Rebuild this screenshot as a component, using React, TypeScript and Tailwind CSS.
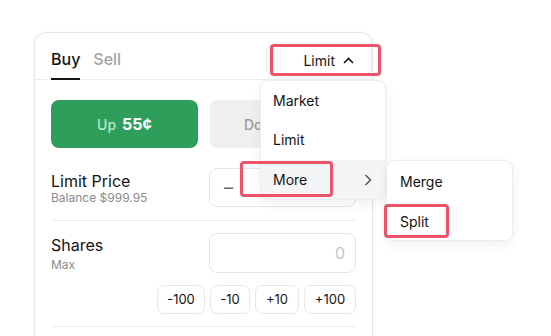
import React from "react";

const font = { fontFamily: "Inter, 'Noto Sans', sans-serif" };

export default function App() {
  return (
    <div className="relative w-[551px] h-[336px] overflow-hidden bg-white text-[#141414]" style={font}>
      <div className="absolute left-[34px] top-[32px] w-[339px] h-[340px] rounded-[12px] border border-[#e6e6e6] bg-white shadow-[0_1px_4px_rgba(0,0,0,0.04)]">
        {/* header */}
        <div className="flex items-end justify-between h-[47px] border-b border-[#ececec] px-4">
          <div className="flex gap-[13px] items-end">
            <div className="relative pb-[10px] text-[16px] font-medium leading-[20px]">
              Buy
              <div className="absolute left-0 right-0 bottom-[-1px] h-[2px] bg-[#141414]" />
            </div>
            <div className="pb-[10px] text-[16px] font-medium leading-[20px] text-[#a3a3a3]">Sell</div>
          </div>
          <div className="mb-[5px] mr-[-16px] flex items-center justify-end gap-[8px] h-[28px] w-[106px] pr-[17px] rounded-[6px] border border-[#e8e8e8] bg-white text-[14px]">
            <span>Limit</span>
            <svg width="11" height="7" viewBox="0 0 11 7" fill="none">
              <polyline points="1,6 5.5,1.5 10,6" stroke="#141414" strokeWidth="1.6" />
            </svg>
          </div>
        </div>
        {/* body */}
        <div className="px-4 pt-[20px]">
          <div className="flex gap-[12px]">
            <div className="flex items-center justify-center gap-[6px] w-[147px] h-[48px] rounded-[8px] bg-[#2f9e5b]">
              <span className="text-[14px] font-medium text-[#b9e8c9]">Up</span>
              <span className="text-[16px] font-bold text-white">55¢</span>
            </div>
            <div className="flex items-center justify-start pl-[34px] flex-1 h-[48px] rounded-[8px] bg-[#efefef]">
              <span className="text-[14px] font-medium text-[#9a9a9a]">Down</span>
            </div>
          </div>

          <div className="flex items-center justify-between mt-[20px] pb-[13px] border-b border-[#efefef]">
            <div className="flex flex-col">
              <span className="text-[16px] leading-[20px]">Limit Price</span>
              <span className="text-[12px] leading-[14px] text-[#8a8a8a]">Balance $999.95</span>
            </div>
            <div className="flex items-center w-[147px] h-[39px] rounded-[8px] border border-[#e6e6e6] px-[14px]">
              <span className="text-[18px] text-[#666]">–</span>
            </div>
          </div>

          <div className="pt-[12px] pb-[12px] border-b border-[#efefef]">
            <div className="flex justify-between">
              <div className="flex flex-col pt-[2px]">
                <span className="text-[16px] leading-[20px]">Shares</span>
                <span className="text-[12px] leading-[20px] text-[#8a8a8a]">Max</span>
              </div>
              <div className="flex items-center justify-end w-[147px] h-[40px] rounded-[8px] border border-[#e6e6e6] px-[10px]">
                <span className="text-[16px] text-[#c4c4c4]">0</span>
              </div>
            </div>
            <div className="flex justify-end gap-[5px] mt-[10px]">
              <div className="flex items-center justify-center w-[48px] h-[29px] rounded-[7px] border border-[#e8e8e8] text-[13px]">-100</div>
              <div className="flex items-center justify-center w-[40px] h-[29px] rounded-[7px] border border-[#e8e8e8] text-[13px]">-10</div>
              <div className="flex items-center justify-center w-[44px] h-[29px] rounded-[7px] border border-[#e8e8e8] text-[13px]">+10</div>
              <div className="flex items-center justify-center w-[52px] h-[29px] rounded-[7px] border border-[#e8e8e8] text-[13px]">+100</div>
            </div>
          </div>
        </div>
      </div>

      {/* dropdown menu */}
      <div className="absolute left-[260px] top-[80px] w-[126px] rounded-[8px] border border-[#ececec] bg-white shadow-[0_4px_12px_rgba(0,0,0,0.06)] overflow-hidden text-[14px]">
        <div className="flex items-center h-[38px] pl-[12px]">Market</div>
        <div className="flex items-center h-[41px] pl-[12px]">Limit</div>
        <div className="flex items-center justify-between h-[39px] pl-[12px] pr-[13px] bg-[#f4f5f6]">
          <span>More</span>
          <svg width="8" height="12" viewBox="0 0 8 12" fill="none">
            <polyline points="1.5,1 6.5,6 1.5,11" stroke="#555" strokeWidth="1.5" />
          </svg>
        </div>
      </div>

      {/* submenu */}
      <div className="absolute left-[386px] top-[160px] w-[127px] h-[81px] rounded-[8px] border border-[#ececec] bg-white shadow-[0_4px_12px_rgba(0,0,0,0.06)] text-[14px] flex flex-col">
        <div className="flex items-center h-[41px] pl-[13px]">Merge</div>
        <div className="flex items-center h-[38px] pl-[13px]">Split</div>
      </div>

      {/* annotation boxes */}
      <div className="absolute left-[270px] top-[44px] w-[111px] h-[32px] rounded-[4px] border-[3px] border-[#ec5369]" />
      <div className="absolute left-[240px] top-[161px] w-[93px] h-[36px] rounded-[4px] border-[3px] border-[#ec5369]" />
      <div className="absolute left-[384px] top-[204px] w-[65px] h-[34px] rounded-[4px] border-[3px] border-[#ec5369]" />
    </div>
  );
}
